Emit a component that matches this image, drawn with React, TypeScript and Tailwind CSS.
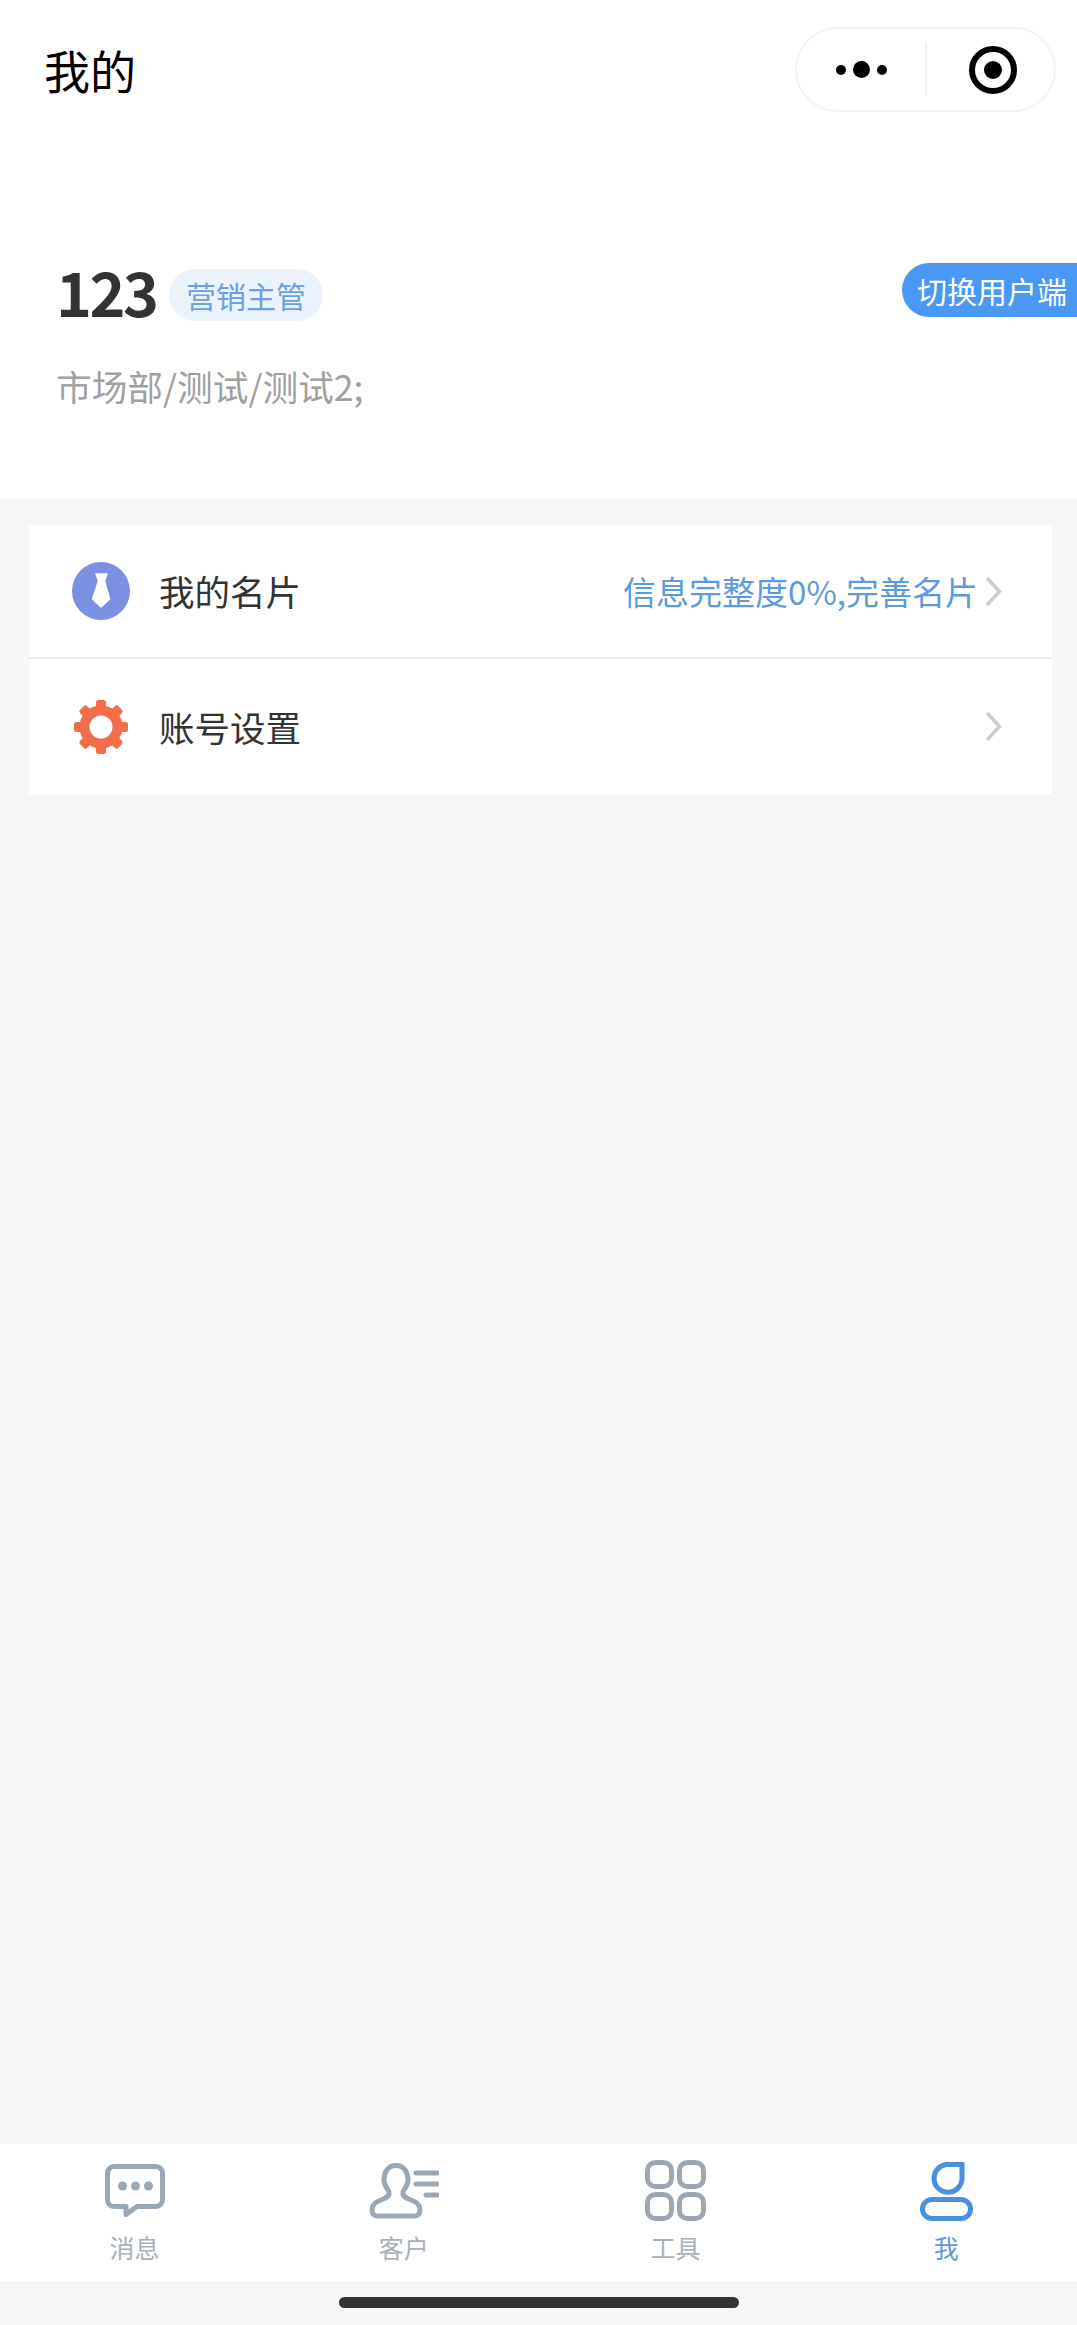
import React from "react";

const Chevron = () => (
  <svg width="17" height="31" viewBox="0 0 17 31" fill="none" className="block">
    <path d="M2 2L14.5 15.5L2 29" stroke="#cdcdcd" strokeWidth="3.5" />
  </svg>
);

const Tie = () => (
  <svg width="58" height="58" viewBox="0 0 58 58" className="block">
    <circle cx="29" cy="29" r="29" fill="#7b90e2" />
    <path d="M24 12H35L32.500 19L37.500 37L29 45L20.500 37L26.500 19Z" fill="#fff" stroke="#fff" strokeWidth="1.500" strokeLinejoin="round" />
  </svg>
);

const Gear = () => (
  <svg width="54" height="54" viewBox="0 0 54 54" className="block">
    {[0, 45, 90, 135, 180, 225, 270, 315].map((a) => (
      <rect key={a} x="22" y="0" width="10" height="12" rx="2.500" fill="#f26d4a" transform={`rotate(${a} 27 27)`} />
    ))}
    <circle cx="27" cy="27" r="16.500" fill="none" stroke="#f26d4a" strokeWidth="10" />
  </svg>
);

const Bubble = () => (
  <svg width="60" height="53" viewBox="0 0 60 53" fill="none" className="block">
    <path
      d="M9 2.500H51a6.500 6.500 0 0 1 6.500 6.500V36a6.500 6.500 0 0 1-6.500 6.500H32L21 50.500V42.500H9a6.500 6.500 0 0 1-6.500-6.500V9A6.500 6.500 0 0 1 9 2.500Z"
      stroke="#9aa8b5"
      strokeWidth="5"
      strokeLinejoin="round"
    />
    <circle cx="17.500" cy="22" r="4.500" fill="#9aa8b5" />
    <circle cx="30.500" cy="22" r="4.500" fill="#9aa8b5" />
    <circle cx="43.500" cy="22" r="4.500" fill="#9aa8b5" />
  </svg>
);

const Person = () => (
  <svg width="70" height="56" viewBox="0 0 70 56" fill="none" className="block">
    <path
      d="M27 2.500C19 2.500 15 9 15 17C15 23 19 26 20 29C21 33 18 35 12 37C6 39 3 42 3 47C3 51 5 53 9 53H45C49 53 51 51 51 47C51 42 48 39 42 37C36 35 33 33 34 29C35 26 39 23 39 17C39 9 35 2.500 27 2.500Z"
      stroke="#9aa8b5"
      strokeWidth="5"
    />
    <path d="M47 10H68M47 21H68M57 32H68" stroke="#9aa8b5" strokeWidth="5" strokeLinecap="round" />
  </svg>
);

const Grid = () => (
  <svg width="61" height="61" viewBox="0 0 61 61" fill="none" className="block">
    <rect x="2.500" y="2.500" width="24" height="24" rx="8" stroke="#9aa8b5" strokeWidth="5" />
    <rect x="34.500" y="2.500" width="24" height="24" rx="8" stroke="#9aa8b5" strokeWidth="5" />
    <rect x="2.500" y="34.500" width="24" height="24" rx="8" stroke="#9aa8b5" strokeWidth="5" />
    <rect x="34.500" y="34.500" width="24" height="24" rx="8" stroke="#9aa8b5" strokeWidth="5" />
  </svg>
);

const Me = () => (
  <svg width="53" height="60" viewBox="0 0 53 60" fill="none" className="block">
    <path d="M42 3.500H26A14 14 0 1 0 42 18Z" stroke="#4a8fe0" strokeWidth="5" />
    <rect x="2.500" y="38.500" width="48" height="19" rx="9.500" stroke="#4a8fe0" strokeWidth="5" />
  </svg>
);

const Tab = ({ icon, label, active, className = "" }: { icon: React.ReactNode; label: string; active?: boolean; className?: string }) => (
  <div className={`flex flex-col items-center ${className}`}>
    <div className="flex h-[61px] items-center justify-center">{icon}</div>
    <span className={`mt-[10px] text-[25px] leading-[32px] ${active ? "text-[#5f97d8]" : "text-[#a8b0b8]"}`}>{label}</span>
  </div>
);

export default function App() {
  return (
    <div
      className="flex h-[2325px] w-full flex-col overflow-hidden bg-[#f6f6f6]"
      style={{ fontFamily: '"Noto Sans CJK SC", "Noto Sans", sans-serif' }}
    >
      <header className="h-[498px] bg-white">
        <div className="flex items-start justify-between pl-[44px] pr-[21px] pt-[27px]">
          <h1 className="text-[46px] font-normal leading-[85px] text-black">我的</h1>
          <div className="flex h-[85px] w-[261px] items-center rounded-full border-2 border-[#f3f3f3]">
            <div className="flex w-[128px] items-center justify-end gap-[7px] pr-[38px]">
              <span className="h-[10px] w-[10px] rounded-full bg-black" />
              <span className="h-[17px] w-[17px] rounded-full bg-black" />
              <span className="h-[10px] w-[10px] rounded-full bg-black" />
            </div>
            <div className="h-[52px] w-[2px] bg-[#f0f0f0]" />
            <div className="flex flex-1 justify-center pl-[4px]">
              <svg width="48" height="48" viewBox="0 0 48 48" className="block">
                <circle cx="24" cy="24" r="21" fill="none" stroke="#000" strokeWidth="6" />
                <circle cx="24" cy="24" r="9" fill="#000" />
              </svg>
            </div>
          </div>
        </div>
        <div className="mt-[151px] flex items-start justify-between">
          <div className="pl-[56px]">
            <div className="flex items-start pt-[6px]">
              <span className="-mt-[4px] w-[113px] text-[61px] font-bold leading-[51px] tracking-[-2.500px] text-[#333]">123</span>
              <span className="flex h-[52px] w-[154px] items-center justify-center rounded-full bg-[#eaf2fd] text-[30px] leading-none text-[#6d9fe0]">
                营销主管
              </span>
            </div>
            <p className="mt-[40px] text-[35.700px] leading-[50px] text-[#a0a0a0]">市场部/测试/测试2;</p>
          </div>
          <div className="flex h-[54px] w-[175px] items-center rounded-l-full bg-[#4a98f5] pl-[15px] text-[30px] leading-none whitespace-nowrap text-white">
            切换用户端
          </div>
        </div>
      </header>

      <section className="ml-[29px] mt-[27px] w-[1023px] bg-white">
        <div className="flex h-[134px] items-center border-b-2 border-[#eeeeee] pl-[43px] pr-[50px]">
          <Tie />
          <span className="ml-[29px] text-[35.500px] leading-[50px] text-[#333]">我的名片</span>
          <span className="ml-auto mr-[7px] text-[33px] leading-[50px] text-[#5b9bdd]">信息完整度0%,完善名片</span>
          <Chevron />
        </div>
        <div className="flex h-[135px] items-center pl-[45px] pr-[50px]">
          <Gear />
          <span className="ml-[31px] text-[35.500px] leading-[50px] text-[#333]">账号设置</span>
          <span className="ml-auto">
            <Chevron />
          </span>
        </div>
      </section>

      <nav className="mt-auto grid h-[137px] grid-cols-4 bg-white pt-[16px]">
        <Tab icon={<Bubble />} label="消息" />
        <Tab icon={<Person />} label="客户" />
        <Tab icon={<Grid />} label="工具" className="pl-[5px]" />
        <Tab icon={<Me />} label="我" active className="pl-[8px]" />
      </nav>
      <div className="flex h-[44px] justify-center bg-[#f6f6f6] pt-[16px]">
        <div className="h-[11px] w-[400px] rounded-full bg-[#333]" />
      </div>
    </div>
  );
}
